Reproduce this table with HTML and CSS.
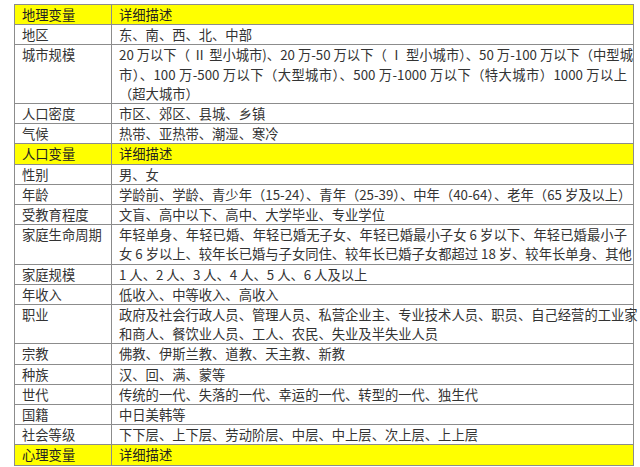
FILE: index.html
```html
<!DOCTYPE html>
<html lang="zh">
<head>
<meta charset="utf-8">
<link rel="stylesheet" href="styles.css">
</head>
<body>
<table class="vars">
  <colgroup><col class="c1"><col class="c2"></colgroup>
  <tr class="head"><td>地理变量</td><td>详细描述</td></tr>
  <tr><td>地区</td><td>东、南、西、北、中部</td></tr>
  <tr><td>城市规模</td><td><span class="ln">20 万以下（ Ⅱ 型小城市)、20 万-50 万以下（ Ⅰ 型小城市）、50 万-100 万以下（中型城</span><span class="ln">市）、100 万-500 万以下（大型城市）、500 万-1000 万以下（特大城市）1000 万以上</span><span class="last">（超大城市）</span></td></tr>
  <tr><td>人口密度</td><td>市区、郊区、县城、乡镇</td></tr>
  <tr><td>气候</td><td>热带、亚热带、潮湿、寒冷</td></tr>
  <tr class="head"><td>人口变量</td><td>详细描述</td></tr>
  <tr><td>性别</td><td>男、女</td></tr>
  <tr><td>年龄</td><td>学龄前、学龄、青少年（15-24）、青年（25-39）、中年（40-64）、老年（65 岁及以上）</td></tr>
  <tr><td>受教育程度</td><td>文盲、高中以下、高中、大学毕业、专业学位</td></tr>
  <tr><td>家庭生命周期</td><td><span class="ln">年轻单身、年轻已婚、年轻已婚无子女、年轻已婚最小子女 6 岁以下、年轻已婚最小子</span><span class="ln">女 6 岁以上、较年长已婚与子女同住、较年长已婚子女都超过 18 岁、较年长单身、其他</span></td></tr>
  <tr><td>家庭规模</td><td>1 人、2 人、3 人、4 人、5 人、6 人及以上</td></tr>
  <tr><td>年收入</td><td>低收入、中等收入、高收入</td></tr>
  <tr><td>职业</td><td><span class="ln">政府及社会行政人员、管理人员、私营企业主、专业技术人员、职员、自己经营的工业家</span><span class="last">和商人、餐饮业人员、工人、农民、失业及半失业人员</span></td></tr>
  <tr><td>宗教</td><td>佛教、伊斯兰教、道教、天主教、新教</td></tr>
  <tr><td>种族</td><td>汉、回、满、蒙等</td></tr>
  <tr><td>世代</td><td>传统的一代、失落的一代、幸运的一代、转型的一代、独生代</td></tr>
  <tr><td>国籍</td><td>中日美韩等</td></tr>
  <tr><td>社会等级</td><td>下下层、上下层、劳动阶层、中层、中上层、次上层、上上层</td></tr>
  <tr class="head"><td>心理变量</td><td>详细描述</td></tr>
</table>
</body>
</html>
```

FILE: styles.css
```css
html, body {
  margin: 0;
  padding: 0;
  background: #ffffff;
}

body {
  padding: 4px 0 0 14px;
  font-family: "Noto Sans CJK SC", "Noto Sans", sans-serif;
  font-size: 13.3px;
  color: #333333;
}

.vars {
  border-collapse: collapse;
  width: 620px;
  table-layout: fixed;
}

.vars .c1 { width: 97px; }

.vars td {
  border: 1px solid #8c8c8c;
  padding: 0 6px 0 7px;
  line-height: 19.2px;
  height: 19px;
  vertical-align: top;
  white-space: nowrap;
}

.vars tr.head td {
  background: #ffff00;
  color: #222222;
}

.ln {
  display: block;
  text-align: justify;
  text-align-last: justify;
}

.last {
  display: block;
}
```
